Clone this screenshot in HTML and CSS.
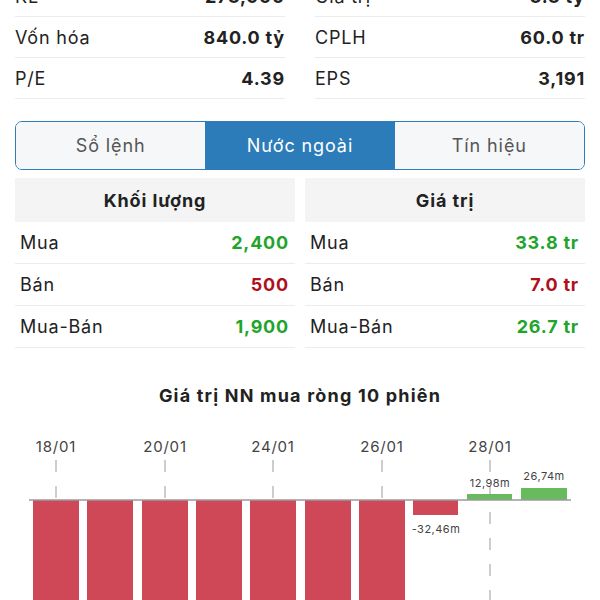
FILE: index.html
```html
<!DOCTYPE html>
<html>
<head>
<meta charset="utf-8"/>
<title>Nước ngoài</title>
<link rel="stylesheet" href="styles.css">
</head>
<body>
<div class="page">

  <div class="stats">
    <div class="stat-col">
      <div class="stat-row"><span>KL</span><b>273,900</b></div>
      <div class="stat-row"><span>Vốn hóa</span><b>840.0 tỷ</b></div>
      <div class="stat-row"><span>P/E</span><b>4.39</b></div>
    </div>
    <div class="stat-col">
      <div class="stat-row"><span>Giá trị</span><b>3.3 tỷ</b></div>
      <div class="stat-row"><span>CPLH</span><b>60.0 tr</b></div>
      <div class="stat-row"><span>EPS</span><b>3,191</b></div>
    </div>
  </div>

  <div class="tabs">
    <div class="tab">Sổ lệnh</div>
    <div class="tab active">Nước ngoài</div>
    <div class="tab">Tín hiệu</div>
  </div>

  <div class="foreign">
    <div class="ftable">
      <div class="fhead">Khối lượng</div>
      <div class="frow"><span>Mua</span><b class="up">2,400</b></div>
      <div class="frow"><span>Bán</span><b class="down">500</b></div>
      <div class="frow"><span>Mua-Bán</span><b class="up">1,900</b></div>
    </div>
    <div class="ftable">
      <div class="fhead">Giá trị</div>
      <div class="frow"><span>Mua</span><b class="up">33.8 tr</b></div>
      <div class="frow"><span>Bán</span><b class="down">7.0 tr</b></div>
      <div class="frow"><span>Mua-Bán</span><b class="up">26.7 tr</b></div>
    </div>
  </div>

  <div class="chart">
    <div class="chart-title">Giá trị NN mua ròng 10 phiên</div>
    <svg class="chart-svg" width="600" height="194" viewBox="0 0 600 194">
      <!-- grid lines under the dates -->
      <g class="grid">
        <line x1="56" y1="54" x2="56" y2="194"/>
        <line x1="165" y1="54" x2="165" y2="194"/>
        <line x1="273" y1="54" x2="273" y2="194"/>
        <line x1="382" y1="54" x2="382" y2="194"/>
        <line x1="490" y1="54" x2="490" y2="194"/>
      </g>
      <g class="dates">
        <text x="56" y="46">18/01</text>
        <text x="165" y="46">20/01</text>
        <text x="273" y="46">24/01</text>
        <text x="382" y="46">26/01</text>
        <text x="490" y="46">28/01</text>
      </g>
      <g class="neg">
        <rect x="33" y="94" width="46" height="120"/>
        <rect x="87" y="94" width="46" height="120"/>
        <rect x="142" y="94" width="46" height="120"/>
        <rect x="196" y="94" width="46" height="120"/>
        <rect x="250" y="94" width="46" height="120"/>
        <rect x="305" y="94" width="46" height="120"/>
        <rect x="359" y="94" width="46" height="120"/>
        <rect x="413" y="94" width="45" height="15"/>
      </g>
      <g class="pos">
        <rect x="467" y="88" width="45" height="6"/>
        <rect x="521" y="82" width="46" height="12"/>
      </g>
      <line class="axis" x1="29" y1="94" x2="571" y2="94"/>
      <g class="vals">
        <text x="436" y="127">-32,46m</text>
        <text x="490" y="81">12,98m</text>
        <text x="544" y="74">26,74m</text>
      </g>
    </svg>
  </div>

</div>
</body>
</html>
```

FILE: styles.css
```css
body {
  margin: 0;
  background-color: white;
  font-family: Inter, "Noto Sans", sans-serif;
  color: #222;
  overflow: hidden;
}

.page {
  height: 600px;
  padding: 0 15px;
  overflow: hidden;
}

/* stock summary */
.stats {
  display: grid;
  grid-template-columns: 1fr 1fr;
  column-gap: 30px;
  margin-top: -24px;
}

.stat-row {
  display: flex;
  align-items: center;
  justify-content: space-between;
  height: 40px;
  border-bottom: 1px solid #ececec;
  font-size: 18px;
  letter-spacing: 0.8px;
}

.stat-row b {
  font-weight: 700;
}

/* segmented tabs */
.tabs {
  display: flex;
  margin-top: 22px;
  height: 47px;
  border: 1px solid #2f7db8;
  border-radius: 7px;
  overflow: hidden;
}

.tab {
  flex: 1;
  display: flex;
  align-items: center;
  justify-content: center;
  background-color: #f6f7f8;
  color: #555;
  font-size: 18px;
  letter-spacing: 0.9px;
}

.tab.active {
  background-color: #2b7cb9;
  color: white;
}

/* foreign trading tables */
.foreign {
  display: grid;
  grid-template-columns: 1fr 1fr;
  column-gap: 10px;
  margin-top: 8px;
}

.fhead {
  display: flex;
  align-items: center;
  justify-content: center;
  height: 44px;
  background-color: #f4f4f4;
  font-size: 18px;
  font-weight: 700;
  letter-spacing: 0.9px;
}

.frow {
  display: flex;
  align-items: center;
  justify-content: space-between;
  height: 41px;
  padding: 0 6px 0 5px;
  border-bottom: 1px solid #ececec;
  font-size: 18px;
  letter-spacing: 0.8px;
}

.up {
  color: #1fa52b;
}

.down {
  color: #b0101c;
}

/* net value chart */
.chart {
  margin: 38px -15px 0;
}

.chart-title {
  text-align: center;
  font-size: 18px;
  line-height: 20px;
  font-weight: 700;
  letter-spacing: 1.2px;
}

.chart-svg {
  display: block;
}

.grid line {
  stroke: #bdbdbd;
  stroke-width: 1.5;
  stroke-dasharray: 12 14;
}

.dates text {
  font-family: Inter, "Noto Sans", sans-serif;
  font-size: 15px;
  letter-spacing: 0.8px;
  fill: #444;
  text-anchor: middle;
}

.neg rect {
  fill: #cf4858;
}

.pos rect {
  fill: #67bb5c;
}

.axis {
  stroke: #9a9a9a;
  stroke-width: 1.5;
}

.vals text {
  font-family: Inter, "Noto Sans", sans-serif;
  font-size: 11px;
  letter-spacing: 0.5px;
  fill: #444;
  text-anchor: middle;
}
```
